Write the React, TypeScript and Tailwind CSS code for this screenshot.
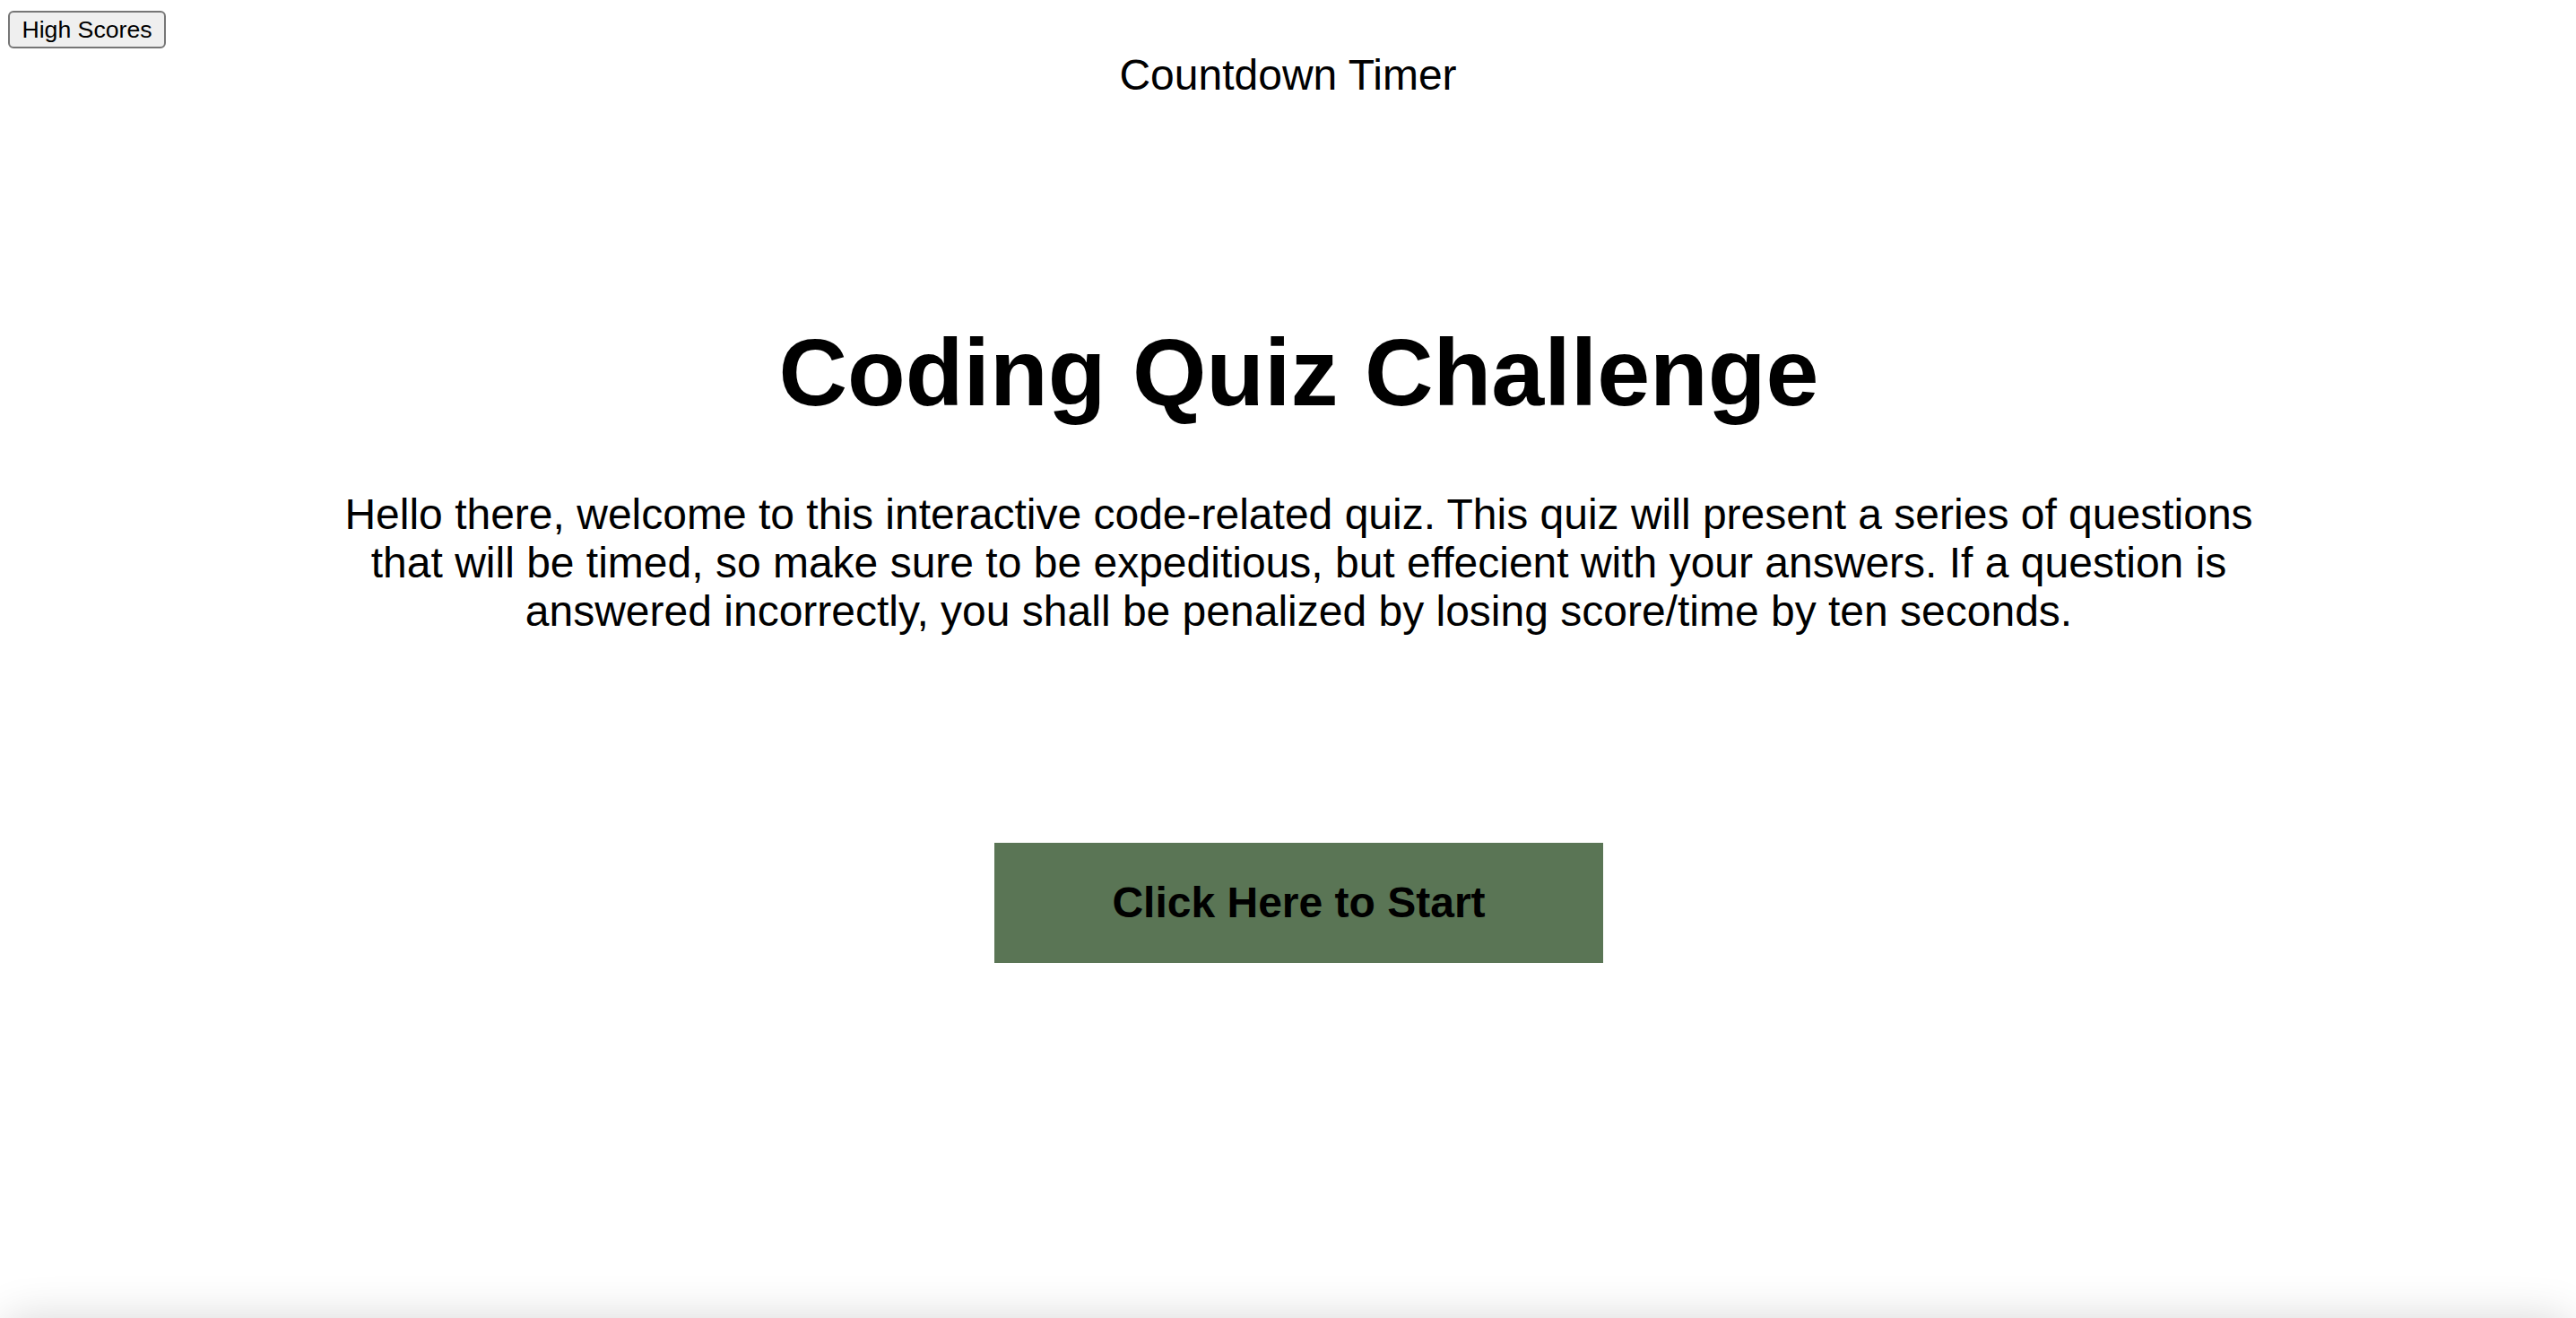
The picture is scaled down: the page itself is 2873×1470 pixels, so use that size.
export default function App() {
  return (
    <div className="relative h-screen overflow-hidden bg-white font-['Liberation_Sans',Arial,sans-serif] text-black">
      {/* top bar */}
      <header className="flex pl-[9px] pt-[12px]">
        <button className="h-[42px] w-[176px] rounded-[6px] border-2 border-[#767676] bg-[#efefef] text-[26.67px] leading-none text-black">
          High Scores
        </button>
      </header>
      <p className="mt-[2px] text-center text-[48px] leading-[55px]">Countdown Timer</p>

      <main className="pl-[24px] text-center">
        <h1 className="mt-[243px] text-[106px] font-bold leading-[122px]">Coding Quiz Challenge</h1>
        <p className="mx-auto mt-[71px] max-w-[2170px] text-[48px] leading-[54px]">
          Hello there, welcome to this interactive code-related quiz. This quiz will present a series of questions
          that will be timed, so make sure to be expeditious, but effecient with your answers. If a question is
          answered incorrectly, you shall be penalized by losing score/time by ten seconds.
        </p>
        <button className="mx-auto mt-[231px] block h-[134px] w-[679px] bg-[#5a7555] text-[48px] font-bold text-black">
          Click Here to Start
        </button>
      </main>

      {/* soft shade along the bottom edge */}
      <div className="pointer-events-none absolute inset-x-0 -bottom-[60px] h-[60px] rounded-[48px] shadow-[0_0_50px_rgba(0,0,0,0.16)]" />
    </div>
  );
}
